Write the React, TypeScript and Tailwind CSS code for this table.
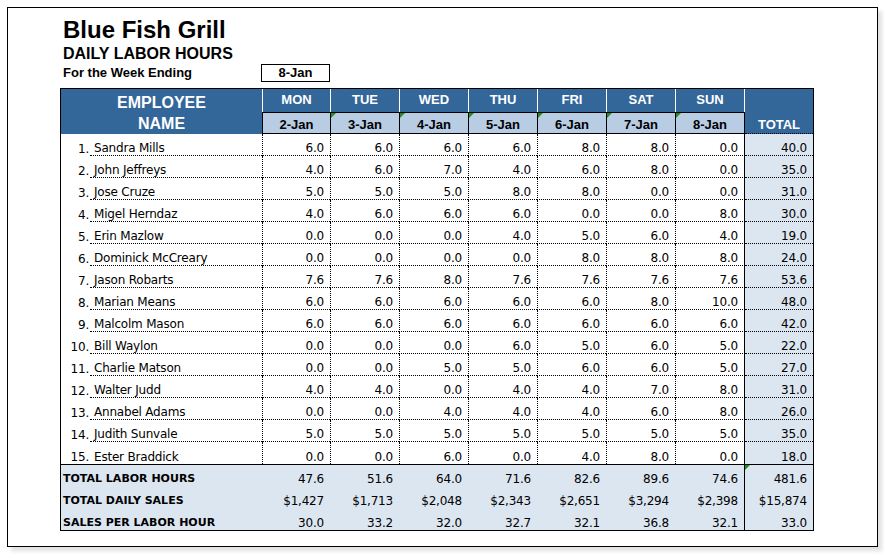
import React from 'react';

const DAYS = [
  { day: 'MON', date: '2-Jan' },
  { day: 'TUE', date: '3-Jan' },
  { day: 'WED', date: '4-Jan' },
  { day: 'THU', date: '5-Jan' },
  { day: 'FRI', date: '6-Jan' },
  { day: 'SAT', date: '7-Jan' },
  { day: 'SUN', date: '8-Jan' },
];

const EMPLOYEES: { name: string; hours: string[]; total: string }[] = [
  { name: 'Sandra Mills', hours: ['6.0', '6.0', '6.0', '6.0', '8.0', '8.0', '0.0'], total: '40.0' },
  { name: 'John Jeffreys', hours: ['4.0', '6.0', '7.0', '4.0', '6.0', '8.0', '0.0'], total: '35.0' },
  { name: 'Jose Cruze', hours: ['5.0', '5.0', '5.0', '8.0', '8.0', '0.0', '0.0'], total: '31.0' },
  { name: 'Migel Herndaz', hours: ['4.0', '6.0', '6.0', '6.0', '0.0', '0.0', '8.0'], total: '30.0' },
  { name: 'Erin Mazlow', hours: ['0.0', '0.0', '0.0', '4.0', '5.0', '6.0', '4.0'], total: '19.0' },
  { name: 'Dominick McCreary', hours: ['0.0', '0.0', '0.0', '0.0', '8.0', '8.0', '8.0'], total: '24.0' },
  { name: 'Jason Robarts', hours: ['7.6', '7.6', '8.0', '7.6', '7.6', '7.6', '7.6'], total: '53.6' },
  { name: 'Marian Means', hours: ['6.0', '6.0', '6.0', '6.0', '6.0', '8.0', '10.0'], total: '48.0' },
  { name: 'Malcolm Mason', hours: ['6.0', '6.0', '6.0', '6.0', '6.0', '6.0', '6.0'], total: '42.0' },
  { name: 'Bill Waylon', hours: ['0.0', '0.0', '0.0', '6.0', '5.0', '6.0', '5.0'], total: '22.0' },
  { name: 'Charlie Matson', hours: ['0.0', '0.0', '5.0', '5.0', '6.0', '6.0', '5.0'], total: '27.0' },
  { name: 'Walter Judd', hours: ['4.0', '4.0', '0.0', '4.0', '4.0', '7.0', '8.0'], total: '31.0' },
  { name: 'Annabel Adams', hours: ['0.0', '0.0', '4.0', '4.0', '4.0', '6.0', '8.0'], total: '26.0' },
  { name: 'Judith Sunvale', hours: ['5.0', '5.0', '5.0', '5.0', '5.0', '5.0', '5.0'], total: '35.0' },
  { name: 'Ester Braddick', hours: ['0.0', '0.0', '6.0', '0.0', '4.0', '8.0', '0.0'], total: '18.0' },
];

const SUMMARY = [
  { label: 'TOTAL LABOR HOURS', values: ['47.6', '51.6', '64.0', '71.6', '82.6', '89.6', '74.6'], total: '481.6' },
  { label: 'TOTAL DAILY SALES', values: ['$1,427', '$1,713', '$2,048', '$2,343', '$2,651', '$3,294', '$2,398'], total: '$15,874' },
  { label: 'SALES PER LABOR HOUR', values: ['30.0', '33.2', '32.0', '32.7', '32.1', '36.8', '32.1'], total: '33.0' },
];

// little green "error" marker Excel puts in a cell corner
function Marker() {
  return (
    <svg className="absolute left-0 top-0" width="5" height="5" viewBox="0 0 5 5">
      <polygon points="0,0 5,0 0,5" fill="#1f8f1f" />
    </svg>
  );
}

export default function App() {
  return (
    <div className="min-h-screen bg-white pt-[7px] pl-[7px] font-['Liberation_Sans',Arial,sans-serif] text-black">
      <div className="w-[871px] h-[540px] border border-black bg-white shadow-[4px_4px_4px_rgba(0,0,0,0.12)] pl-[52px] pt-[8px]">
        {/* Title block */}
        <div className="pl-[3px]">
          <h1 className="text-[24px] leading-[28px] font-bold">Blue Fish Grill</h1>
          <h2 className="text-[16px] leading-[20px] font-bold">DAILY LABOR HOURS</h2>
          <div className="flex items-center">
            <span className="w-[198px] text-[13px] leading-[18px] font-bold">For the Week Ending</span>
            <span className="w-[69px] h-[18px] border border-black text-center text-[13px] leading-[16px] font-bold">
              8-Jan
            </span>
          </div>
        </div>

        {/* Sheet */}
        <div className="mt-[6px] grid w-[754px] border border-black grid-cols-[29px_172px_68px_69px_69px_69px_69px_69px_70px_68px]">
          {/* Header */}
          <div className="col-span-2 row-span-2 bg-[#336699] pt-[3px] text-center text-[16px] leading-[21px] font-bold text-white">
            <div>EMPLOYEE</div>
            <div>NAME</div>
          </div>
          {DAYS.map((d, i) => (
            <div
              key={d.day}
              className={`h-[23px] bg-[#336699] border-l border-white text-center text-[13px] leading-[21px] font-bold text-white ${
                i === 6 ? 'border-r' : ''
              }`}
            >
              {d.day}
            </div>
          ))}
          <div className="row-span-2 flex items-end justify-center bg-[#336699] border-b border-dotted border-black text-[13px] leading-[16px] font-bold text-white">
            TOTAL
          </div>
          {DAYS.map((d, i) => (
            <div
              key={d.date}
              className={`relative flex h-[22px] items-end justify-center bg-[#b8cce4] border-t border-l border-b border-black text-[13px] leading-[16px] font-bold ${
                i === 6 ? 'border-r' : ''
              }`}
            >
              {i > 0 && <Marker />}
              {d.date}
            </div>
          ))}

          {/* Employee rows */}
          {EMPLOYEES.map((emp, r) => {
            const last = r === EMPLOYEES.length - 1;
            const cell = "flex h-[22px] items-end font-['DejaVu_Sans',sans-serif] text-[12px] leading-[14px] tracking-[-0.2px]";
            return (
              <React.Fragment key={emp.name}>
                <div className={`${cell} justify-end pr-[1px]`}>{r + 1}.</div>
                <div className={`${cell} pl-[4px] ${last ? '' : 'border-b border-dotted border-black'}`}>{emp.name}</div>
                {emp.hours.map((h, i) => (
                  <div
                    key={i}
                    className={`${cell} justify-end pr-[6px] border-l border-dotted border-black ${
                      last ? '' : 'border-b'
                    } ${i === 6 ? 'border-r' : ''}`}
                    style={i === 6 ? { borderRightStyle: 'solid' } : undefined}
                  >
                    {h}
                  </div>
                ))}
                <div className={`${cell} justify-end pr-[6px] bg-[#dce6f1] ${last ? '' : 'border-b border-dotted border-black'}`}>
                  {emp.total}
                </div>
              </React.Fragment>
            );
          })}

          {/* Summary rows */}
          {SUMMARY.map((row, r) => {
            const top = r === 0 ? 'border-t border-black' : '';
            const cell = "flex h-[22px] items-end bg-[#dce6f1] font-['DejaVu_Sans',sans-serif] text-[12px] leading-[14px] tracking-[-0.2px]";
            return (
              <React.Fragment key={row.label}>
                <div className={`col-span-2 flex h-[22px] items-end bg-[#dce6f1] pl-[2px] font-['DejaVu_Sans',sans-serif] text-[11px] leading-[14px] font-bold ${top}`}>
                  {row.label}
                </div>
                {row.values.map((v, i) => (
                  <div key={i} className={`${cell} justify-end pr-[6px] ${top} ${i === 6 ? 'border-r border-black' : ''}`}>
                    {v}
                  </div>
                ))}
                <div className={`relative ${cell} justify-end pr-[6px] ${top}`}>
                  {r === 0 && <Marker />}
                  {row.total}
                </div>
              </React.Fragment>
            );
          })}
        </div>
      </div>
    </div>
  );
}
